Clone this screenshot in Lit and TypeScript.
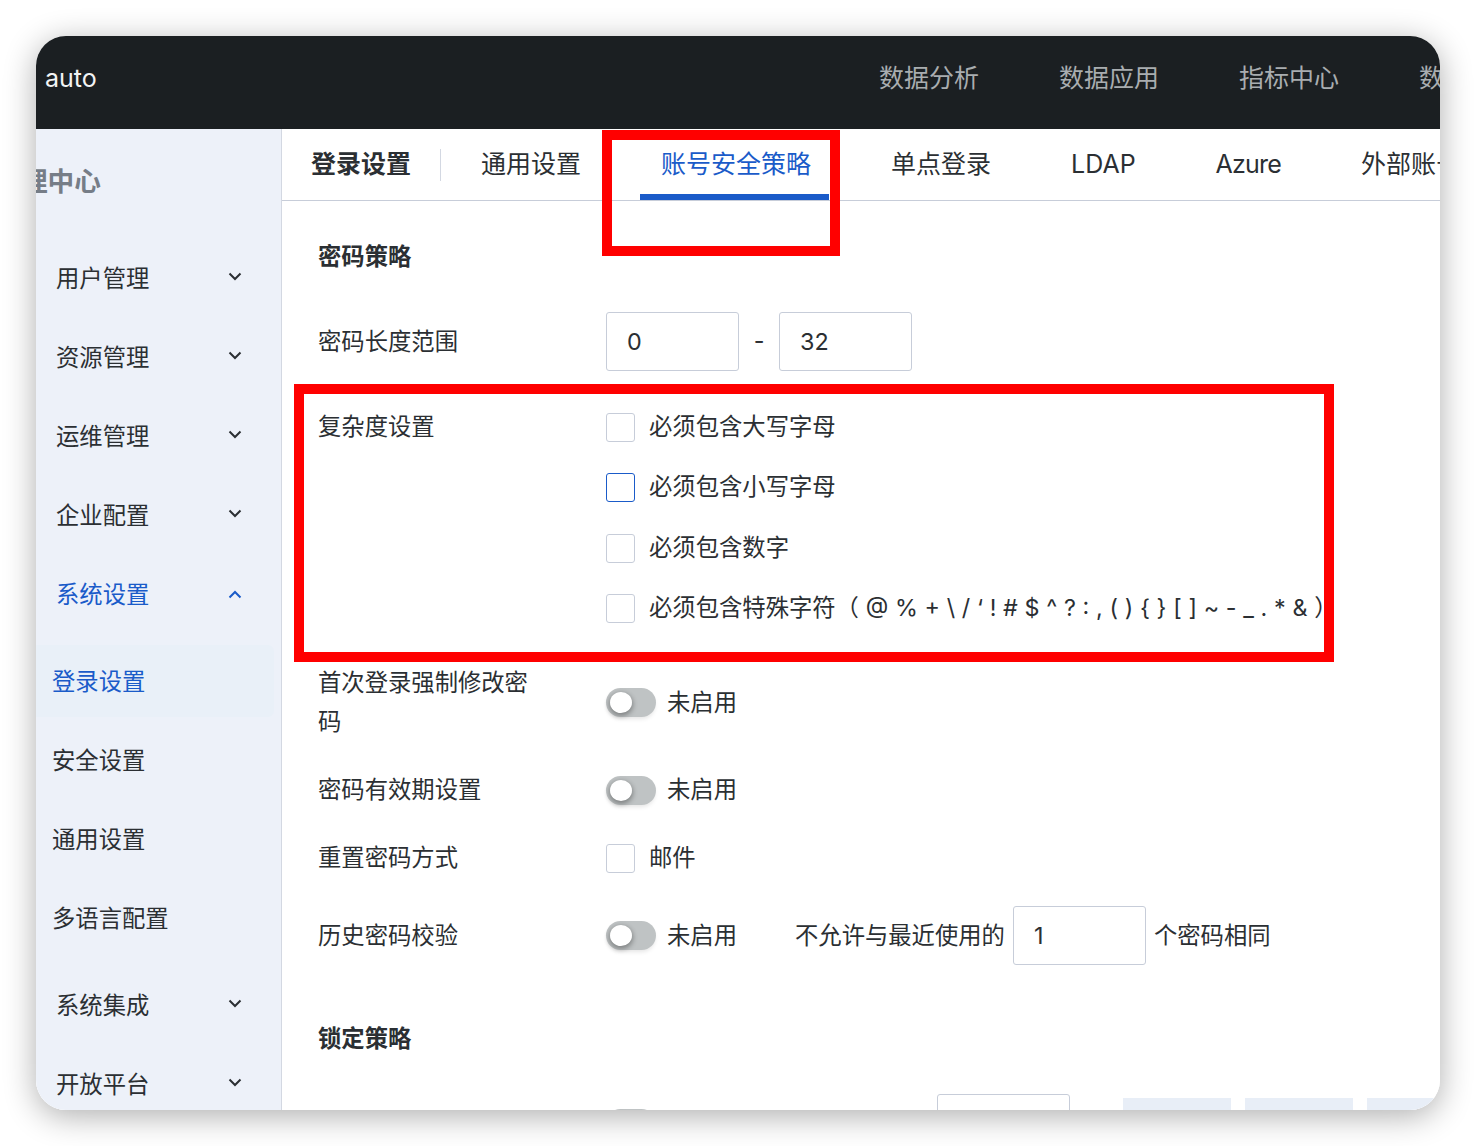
import { css, html, LitElement } from 'lit';
import { customElement } from 'lit/decorators.js';

const TOP_NAV = ['数据分析', '数据应用', '指标中心', '数据管理'];
const TABS = ['通用设置', '账号安全策略', '单点登录', 'LDAP', 'Azure', '外部账号'];
const COMPLEXITY = [
  { text: '必须包含大写字母', focus: false },
  { text: '必须包含小写字母', focus: true },
  { text: '必须包含数字', focus: false },
  { text: "必须包含特殊字符（ @ % + \\ / ‘ ! # $ ^ ? : , ( ) { } [ ] ~ - _ . * & ）", focus: false },
];

const chevron = (up = false) => html`
  <svg class="chev" viewBox="0 0 14 9" width="14" height="9">
    <path d=${up ? 'M1.5 7.5 7 2l5.5 5.5' : 'M1.5 1.5 7 7l5.5-5.5'} fill="none" stroke="currentColor" stroke-width="2"></path>
  </svg>
`;

@customElement('app-root')
export class AppRoot extends LitElement {
  static styles = css`
    :host {
      display: block;
      height: 1146px;
      background: #fff;
      font-family: Inter, "Noto Sans CJK SC", sans-serif;
      font-size: 23.33px;
      line-height: 1.4;
      color: #2b2f33;
      overflow: hidden;
    }
    .frame {
      position: relative;
      top: 36px;
      margin-left: 36px;
      width: 1404px;
      height: 1074px;
      border-radius: 30px;
      overflow: hidden;
      background: #fff;
    }
    .shadow {
      position: absolute;
      top: 36px;
      left: 36px;
      width: 1404px;
      height: 1074px;
      border-radius: 30px;
      box-shadow: 0 6px 32px rgba(0, 0, 0, 0.32);
    }
    .topbar {
      height: 85px;
      padding: 0 0 8px 9px;
      background: #1b1f22;
      display: flex;
      align-items: center;
      white-space: nowrap;
    }
    .brand {
      color: #f2f3f4;
      font-size: 25px;
      width: 834px;
      flex: none;
    }
    .topnav {
      display: flex;
      gap: 80px;
      color: #a9adb0;
      font-size: 25px;
    }
    .body {
      display: flex;
      height: 981px;
    }
    .side {
      width: 245px;
      flex: none;
      background: #edf1f9;
      border-right: 1px solid #d3d8e2;
      white-space: nowrap;
      overflow: hidden;
    }
    .side-title {
      margin: 32px 0 37.5px -95px;
      line-height: 40px;
      font-size: 26.67px;
      font-weight: 700;
      color: #767d87;
    }
    .item {
      box-sizing: border-box;
      height: 79px;
      padding: 2px 39px 0 20px;
      display: flex;
      align-items: center;
      justify-content: space-between;
    }
    .item.open {
      color: #1a5bc9;
      margin-bottom: 11.5px;
    }
    .chev {
      display: block;
      margin-top: -5px;
    }
    .item.open .chev {
      margin-top: -1px;
    }
    .sub {
      box-sizing: border-box;
      width: 238px;
      height: 72px;
      padding: 2px 0 0 16px;
      margin-bottom: 7px;
      display: flex;
      align-items: center;
      border-radius: 0 6px 6px 0;
    }
    .sub.active {
      background: #e9f0f8;
      color: #1a5bc9;
    }
    .sub.last {
      margin-bottom: 11.5px;
    }
    .main {
      flex: 1;
      min-width: 0;
      overflow: hidden;
    }
    .tabs {
      height: 71px;
      border-bottom: 1px solid #c7cdd9;
      display: flex;
      align-items: center;
      padding-left: 29px;
      font-size: 25px;
      white-space: nowrap;
    }
    .tabs-title {
      font-weight: 700;
      padding: 0 29px 2px 0;
      line-height: 30px;
      border-right: 1px solid #d3d8e2;
    }
    .tab {
      position: relative;
      padding: 0 40px;
    }
    .tab.tight {
      letter-spacing: -0.8px;
    }
    .tab.active {
      color: #1a5bc9;
    }
    .tab.active::after {
      content: '';
      position: absolute;
      left: 19px;
      right: 22px;
      top: 47px;
      height: 6px;
      background: #1a5bc9;
    }
    .content {
      padding-left: 36px;
      white-space: nowrap;
    }
    .heading {
      height: 40px;
      line-height: 40px;
      margin-top: 36px;
      font-weight: 700;
    }
    .row {
      display: flex;
      align-items: center;
      height: 40px;
    }
    .label {
      width: 288px;
      flex: none;
    }
    .inputs {
      height: 59px;
      margin-top: 35px;
    }
    .inputs .label,
    .inputs .state,
    .inputs .after-state,
    .inputs .tail {
      padding-top: 2px;
    }
    .input {
      width: 133px;
      height: 59px;
      box-sizing: border-box;
      border: 1px solid #c7cdd9;
      border-radius: 3px;
      padding: 2px 0 0 20px;
      display: flex;
      align-items: center;
      flex: none;
    }
    .dash {
      width: 40px;
      text-align: center;
    }
    .complex {
      display: flex;
      margin-top: 25.75px;
    }
    .complex .label {
      line-height: 60.5px;
      height: 60.5px;
    }
    .check-row {
      height: 60.5px;
      display: flex;
      align-items: center;
      gap: 14px;
      word-spacing: 0.15px;
    }
    .box {
      width: 29px;
      height: 29px;
      box-sizing: border-box;
      border: 1px solid #c7cdd9;
      border-radius: 3px;
      background: #fff;
      flex: none;
    }
    .box.focus {
      border-color: #1a5bc9;
    }
    .first {
      display: flex;
      align-items: center;
      margin-top: 24px;
    }
    .first .label {
      width: 210px;
      margin-right: 78px;
      line-height: 39px;
      white-space: normal;
    }
    .first .toggle {
      margin-top: 2px;
    }
    .first .state {
      margin-top: 4px;
    }
    .toggle {
      position: relative;
      width: 50px;
      height: 29px;
      border-radius: 15px;
      background: #bfc3c4;
      box-shadow: 0 3px 4px -1px rgba(0, 0, 0, 0.1);
      flex: none;
    }
    .toggle::after {
      content: '';
      position: absolute;
      left: 4px;
      top: 4px;
      width: 22px;
      height: 21px;
      border-radius: 50%;
      background: #fff;
      box-shadow: 0 2px 5px 1px rgba(0, 0, 0, 0.32);
    }
    .state {
      margin-left: 11px;
    }
    .after-state {
      margin-left: 58px;
    }
    .count {
      margin: 0 8px;
    }
    .mail {
      margin-left: 14px;
    }
    .lock-field {
      margin-left: 281px;
    }
    .blue {
      width: 108px;
      height: 51px;
      background: #e8eef7;
      flex: none;
      margin-left: 14px;
    }
    .blue.first-btn {
      margin-left: 53px;
    }
    .gap-a {
      margin-top: 29.5px;
    }
    .gap-b {
      margin-top: 28px;
    }
    .gap-c {
      margin-top: 54px;
    }
    .mark {
      position: absolute;
      box-sizing: border-box;
      border: 10px solid #f00;
    }
    .mark.tab-mark {
      left: 566px;
      top: 94px;
      width: 238px;
      height: 126px;
    }
    .mark.rule-mark {
      left: 258px;
      top: 348px;
      width: 1040px;
      height: 278px;
    }
  `;

  render() {
    return html`
      <div class="shadow"></div>
      <div class="frame">
        <div class="topbar">
          <div class="brand">auto</div>
          <div class="topnav">${TOP_NAV.map((t) => html`<span>${t}</span>`)}</div>
        </div>
        <div class="body">
          <div class="side">
            <div class="side-title">系统管理中心</div>
            ${['用户管理', '资源管理', '运维管理', '企业配置'].map(
              (t) => html`<div class="item"><span>${t}</span>${chevron()}</div>`
            )}
            <div class="item open"><span>系统设置</span>${chevron(true)}</div>
            <div class="sub active">登录设置</div>
            <div class="sub">安全设置</div>
            <div class="sub">通用设置</div>
            <div class="sub last">多语言配置</div>
            ${['系统集成', '开放平台'].map(
              (t) => html`<div class="item"><span>${t}</span>${chevron()}</div>`
            )}
          </div>
          <div class="main">
            <div class="tabs">
              <div class="tabs-title">登录设置</div>
              ${TABS.map(
                (t, i) =>
                  html`<div class="tab ${i === 1 ? 'active' : ''} ${t === 'Azure' ? 'tight' : ''}">${t}</div>`
              )}
            </div>
            <div class="content">
              <div class="heading">密码策略</div>
              <div class="row inputs">
                <div class="label">密码长度范围</div>
                <div class="input">0</div>
                <div class="dash">-</div>
                <div class="input">32</div>
              </div>
              <div class="complex">
                <div class="label">复杂度设置</div>
                <div>
                  ${COMPLEXITY.map(
                    (c) => html`
                      <div class="check-row">
                        <div class="box ${c.focus ? 'focus' : ''}"></div>
                        <span>${c.text}</span>
                      </div>
                    `
                  )}
                </div>
              </div>
              <div class="first">
                <div class="label">首次登录强制修改密码</div>
                <div class="toggle"></div>
                <div class="state">未启用</div>
              </div>
              <div class="row gap-a">
                <div class="label">密码有效期设置</div>
                <div class="toggle"></div>
                <div class="state">未启用</div>
              </div>
              <div class="row gap-b">
                <div class="label">重置密码方式</div>
                <div class="box"></div>
                <div class="mail">邮件</div>
              </div>
              <div class="row inputs gap-b">
                <div class="label">历史密码校验</div>
                <div class="toggle"></div>
                <div class="state">未启用</div>
                <div class="after-state">不允许与最近使用的</div>
                <div class="input count">1</div>
                <div class="tail">个密码相同</div>
              </div>
              <div class="heading gap-c">锁定策略</div>
              <div class="row inputs">
                <div class="label"></div>
                <div class="toggle"></div>
                <div class="input lock-field"></div>
                <div class="blue first-btn"></div>
                <div class="blue"></div>
                <div class="blue"></div>
              </div>
            </div>
          </div>
        </div>
        <div class="mark tab-mark"></div>
        <div class="mark rule-mark"></div>
      </div>
    `;
  }
}
